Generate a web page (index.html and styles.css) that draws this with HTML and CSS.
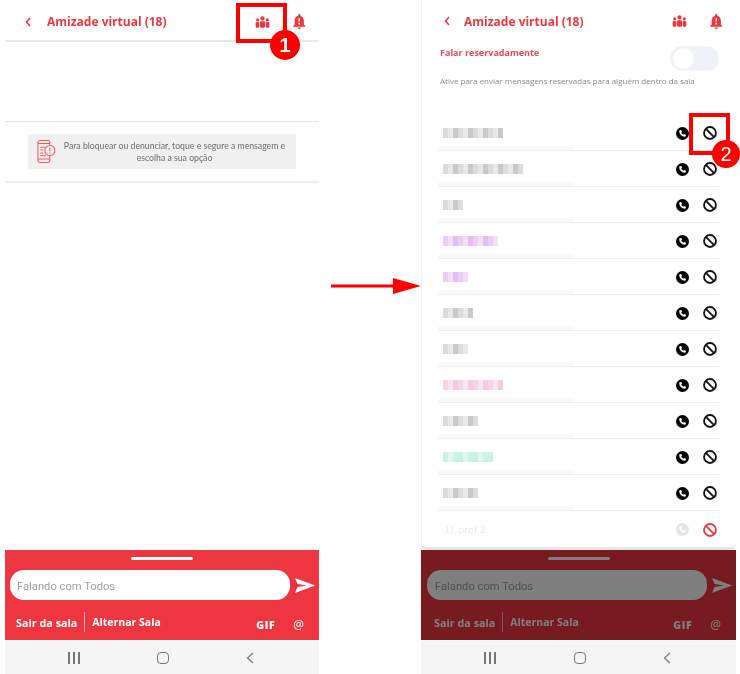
FILE: index.html
```html
<!DOCTYPE html>
<html lang="en">
<head>
  <meta name="viewport" content="width=device-width, initial-scale=1.0">
  <title>Amizade virtual</title>
  <link rel="stylesheet" href="styles.css">
</head>
<body>

  <svg class="defs" width="0" height="0">
    <symbol id="i-back" viewBox="0 0 6 10"><path d="M5 1 1.500 5 5 9" fill="none" stroke="currentColor" stroke-width="1.600"/></symbol>
    <symbol id="i-group" viewBox="0 0 16 13">
      <circle cx="8" cy="2.600" r="2.300"/><circle cx="2.800" cy="4.200" r="1.700"/><circle cx="13.200" cy="4.200" r="1.700"/>
      <rect x="5" y="5.600" width="6" height="7.200" rx="1.600"/><rect x="0.600" y="6.600" width="3.700" height="6.200" rx="1.200"/><rect x="11.700" y="6.600" width="3.700" height="6.200" rx="1.200"/>
    </symbol>
    <symbol id="i-bell" viewBox="4 2.500 16 19.500"><path d="M18 16v-5c0-3.070-1.640-5.640-4.500-6.320V4c0-.830-.670-1.500-1.500-1.500s-1.500.670-1.500 1.500v.680C7.630 5.360 6 7.920 6 11v5l-2 2v1h16v-1l-2-2zm-5 0h-2v-2h2v2zm0-4h-2V8h2v4zm-1 10c1.100 0 2-.900 2-2h-4c0 1.100.900 2 2 2z"/></symbol>
    <symbol id="i-call" viewBox="0 0 24 24">
      <circle cx="12" cy="12" r="12"/>
      <path fill="#fff" d="M7.200 5.800 9.600 5.400l1.500 3.400-1.500 1.500c.800 1.700 2.200 3.100 3.900 3.900l1.500-1.500 3.400 1.500-.400 2.400c-.200.800-.900 1.200-1.600 1.200C10.600 17.800 6 13.200 6 7.400c0-.700.500-1.400 1.200-1.600z"/>
    </symbol>
    <symbol id="i-block" viewBox="0 0 24 24">
      <circle cx="12" cy="12" r="10.200" fill="none" stroke="currentColor" stroke-width="3.200"/>
      <path d="M5 5l14 14" stroke="currentColor" stroke-width="3.200"/>
    </symbol>
    <symbol id="i-send" viewBox="0 0 20 15"><path d="M0 0 20 7.500 0 15 2.500 9 12 7.500 2.500 6z"/></symbol>
    <symbol id="i-tip" viewBox="0 0 20 25">
      <g fill="none" stroke="currentColor" stroke-width="1.100">
        <rect x="1" y="1" width="12.500" height="23" rx="2"/>
        <path d="M1 4h12.500M1 20.500h12.500M3.500 8h5M3.500 11h3M3.500 14h3M3.500 17h6"/>
        <circle cx="13.500" cy="11.500" r="5.300" fill="#f0f0f0"/>
      </g>
      <path d="M12.900 8.500h1.200v3.800h-1.200zM12.900 13.200h1.200v1.200h-1.200z"/>
    </symbol>
  </svg>

  <div class="page">

    <!-- tela 1 -->
    <div class="phone phone-left">
      <div class="top-bar with-line">
        <svg class="back"><use href="#i-back"/></svg>
        <b class="room-title">Amizade virtual (18)</b>
        <svg class="ico-group"><use href="#i-group"/></svg>
        <svg class="ico-bell"><use href="#i-bell"/></svg>
      </div>
      <div class="chat">
        <div class="tip-wrap">
          <div class="tip">
            <svg class="tip-ico"><use href="#i-tip"/></svg>
            <p class="tip-text">Para bloquear ou denunciar, toque e segure a mensagem e<br>escolha a sua opção</p>
          </div>
        </div>
      </div>
      <div class="bar">
        <div class="handle"></div>
        <div class="input-row">
          <input class="msg" type="text" placeholder="Falando com Todos">
          <svg class="send"><use href="#i-send"/></svg>
        </div>
        <div class="links">
          <span class="link">Sair da sala</span>
          <span class="link link-2">Alternar Sala</span>
          <span class="gif">GIF</span>
          <span class="at">@</span>
        </div>
      </div>
      <div class="nav">
        <span class="nav-lines"><i></i><i></i><i></i></span>
        <span class="nav-home"></span>
        <svg class="nav-back" viewBox="0 0 8 12"><path d="M7 1 1.500 6 7 11" fill="none" stroke="#777" stroke-width="1.200"/></svg>
      </div>
      <div class="mark mark-1"></div>
      <div class="badge badge-1">1</div>
    </div>

    <div class="arrow-col">
      <svg class="arrow" viewBox="0 0 90 18"><path d="M0 7.500h62v3H0z"/><path d="M62 1l28 8-28 8z"/></svg>
    </div>

    <!-- tela 2 -->
    <div class="phone phone-right">
      <div class="card">
        <div class="top-bar">
          <svg class="back"><use href="#i-back"/></svg>
          <b class="room-title">Amizade virtual (18)</b>
          <svg class="ico-group"><use href="#i-group"/></svg>
          <svg class="ico-bell"><use href="#i-bell"/></svg>
        </div>
        <div class="private">
          <b class="private-title">Falar reservadamente</b>
          <span class="toggle"><i></i></span>
        </div>
        <p class="private-help">Ative para enviar mensagens reservadas para alguém dentro da sala</p>
        <div class="people">
          <div class="row"><span class="name gray w60"></span><svg class="call"><use href="#i-call"/></svg><svg class="block"><use href="#i-block"/></svg></div>
          <div class="row"><span class="name gray w80"></span><svg class="call"><use href="#i-call"/></svg><svg class="block"><use href="#i-block"/></svg></div>
          <div class="row"><span class="name gray w20"></span><svg class="call"><use href="#i-call"/></svg><svg class="block"><use href="#i-block"/></svg></div>
          <div class="row"><span class="name purple w55"></span><svg class="call"><use href="#i-call"/></svg><svg class="block"><use href="#i-block"/></svg></div>
          <div class="row"><span class="name purple w25"></span><svg class="call"><use href="#i-call"/></svg><svg class="block"><use href="#i-block"/></svg></div>
          <div class="row"><span class="name gray w30"></span><svg class="call"><use href="#i-call"/></svg><svg class="block"><use href="#i-block"/></svg></div>
          <div class="row"><span class="name gray w25"></span><svg class="call"><use href="#i-call"/></svg><svg class="block"><use href="#i-block"/></svg></div>
          <div class="row"><span class="name pink w60"></span><svg class="call"><use href="#i-call"/></svg><svg class="block"><use href="#i-block"/></svg></div>
          <div class="row"><span class="name gray w35"></span><svg class="call"><use href="#i-call"/></svg><svg class="block"><use href="#i-block"/></svg></div>
          <div class="row"><span class="name green w50"></span><svg class="call"><use href="#i-call"/></svg><svg class="block"><use href="#i-block"/></svg></div>
          <div class="row"><span class="name gray w35"></span><svg class="call"><use href="#i-call"/></svg><svg class="block"><use href="#i-block"/></svg></div>
          <div class="row row-blocked"><span class="blocked-name">J.J. prof 2</span><svg class="call"><use href="#i-call"/></svg><svg class="block"><use href="#i-block"/></svg></div>
        </div>
      </div>
      <div class="bar dimmed">
        <div class="handle"></div>
        <div class="input-row">
          <input class="msg" type="text" placeholder="Falando com Todos">
          <svg class="send"><use href="#i-send"/></svg>
        </div>
        <div class="links">
          <span class="link">Sair da sala</span>
          <span class="link link-2">Alternar Sala</span>
          <span class="gif">GIF</span>
          <span class="at">@</span>
        </div>
      </div>
      <div class="nav">
        <span class="nav-lines"><i></i><i></i><i></i></span>
        <span class="nav-home"></span>
        <svg class="nav-back" viewBox="0 0 8 12"><path d="M7 1 1.500 6 7 11" fill="none" stroke="#777" stroke-width="1.200"/></svg>
      </div>
      <div class="mark mark-2"></div>
      <div class="badge badge-2">2</div>
    </div>

  </div>

</body>
</html>
```

FILE: styles.css
```css
body {
  margin: 0;
  background: #fff;
  font-family: "Open Sans", sans-serif;
}
.defs {
  position: absolute;
}
.page {
  display: flex;
  height: 674px;
  width: 740px;
  overflow: hidden;
  padding-left: 5px;
  box-sizing: border-box;
}
.phone {
  position: relative;
  display: flex;
  flex-direction: column;
  height: 674px;
  flex: none;
  filter: blur(.3px);
}
.phone-left {
  width: 314px;
}
.phone-right {
  width: 315px;
}

/* arrow between the two screens */
.arrow-col {
  width: 102px;
  flex: none;
  padding: 277px 0 0 12px;
  box-sizing: border-box;
}
.arrow {
  display: block;
  width: 90px;
  height: 18px;
  fill: #f00;
}

/* header */
.top-bar {
  display: flex;
  align-items: center;
  height: 41px;
  flex: none;
  box-sizing: border-box;
  padding: 1px 0 0 22px;
  color: #ee3640;
  fill: #ee3640;
}
.with-line {
  height: 42px;
  padding: 3px 0 0 20px;
  border-bottom: 2px solid #e6e6e6;
  border-radius: 0 0 3px 3px;
}
.back {
  width: 6px;
  height: 10px;
  flex: none;
}
.room-title {
  margin-left: 16px;
  width: 208px;
  flex: none;
  font-size: 12px;
  font-weight: 700;
  white-space: nowrap;
}
.phone-right .room-title {
  margin-left: 14px;
}
.ico-group {
  width: 15px;
  height: 12px;
  flex: none;
}
.ico-bell {
  width: 12.5px;
  height: 15px;
  margin-left: 23px;
  flex: none;
}

/* left screen content */
.chat {
  flex: 1;
  padding-top: 79px;
}
.tip-wrap {
  border-top: 1px solid #e8e4e6;
  border-bottom: 2px solid #eeeeee;
  padding: 12px 23px;
}
.tip {
  display: flex;
  align-items: center;
  height: 35px;
  background: #f0f0f0;
  padding: 0 10px 0 9px;
}
.tip-ico {
  width: 19px;
  height: 25px;
  flex: none;
  color: #ee5a62;
  fill: #ee5a62;
}
.tip-text {
  flex: 1;
  margin: 0 0 0 7px;
  font-family: Lato, sans-serif;
  font-size: 8.7px;
  line-height: 11.5px;
  text-align: center;
  white-space: nowrap;
  color: #6d6d6d;
}

/* right screen content */
.card {
  flex: 1;
  border-left: 1px solid #f0f0f0;
  border-bottom: 3px solid #e6e6e6;
  border-radius: 0 0 6px 6px;
}
.private {
  display: flex;
  justify-content: space-between;
  align-items: flex-start;
  margin-top: 5px;
  padding: 0 18px;
}
.private-title {
  font-size: 9px;
  font-weight: 700;
  color: #ee4a52;
}
.toggle {
  width: 47px;
  height: 23px;
  margin-top: 1px;
  padding: 1px 2px;
  box-sizing: border-box;
  border-radius: 12px;
  background: #eef1f5;
  box-shadow: 0 0 2px #dde;
}
.toggle i {
  display: block;
  width: 21px;
  height: 21px;
  border-radius: 50%;
  background: #fff;
}
.private-help {
  margin: 0;
  padding: 4px 0 0 18px;
  font-size: 8px;
  line-height: 14px;
  color: #8a8a8a;
  white-space: nowrap;
}
.people {
  margin: 27px 17px 0 16px;
}
.row {
  display: flex;
  align-items: center;
  height: 36px;
  padding: 1px 2px 0 5px;
  box-sizing: border-box;
  border-bottom: 1px solid #eeeeee;
  background: linear-gradient(#fafafa, #fafafa) left bottom / 136px 4px no-repeat;
}
.row-blocked {
  border-bottom: 0;
  background: none;
}
.name {
  height: 10px;
  margin-right: auto;
  filter: blur(.6px);
}
.gray {
  background: repeating-linear-gradient(90deg, #dcdcdc 0 5px, #e9e9e9 5px 10px, #c9c9c9 10px 15px);
}
.purple {
  background: repeating-linear-gradient(90deg, #eccdf6 0 5px, #f3dff9 5px 10px, #e6bdf3 10px 15px);
}
.pink {
  background: repeating-linear-gradient(90deg, #f9d3e6 0 5px, #fde6f0 5px 10px, #f8c9e0 10px 15px);
}
.green {
  background: repeating-linear-gradient(90deg, #c5f3e1 0 5px, #dff8ee 5px 10px, #c9f4e3 10px 15px);
}
.w20 { width: 20px; }
.w25 { width: 25px; }
.w30 { width: 30px; }
.w35 { width: 35px; }
.w50 { width: 50px; }
.w55 { width: 55px; }
.w60 { width: 60px; }
.w80 { width: 80px; }
.blocked-name {
  margin: 0 auto 0 3px;
  font-size: 9.5px;
  color: #e9e9e9;
}
.call {
  width: 13px;
  height: 13px;
  flex: none;
  fill: #000;
}
.block {
  width: 14px;
  height: 14px;
  flex: none;
  margin-left: 14px;
  color: #111;
}
.row-blocked .call {
  fill: #e4e4e4;
}
.row-blocked .block {
  color: #ee3640;
}

/* bottom bar */
.bar {
  position: relative;
  height: 90px;
  flex: none;
  margin-bottom: 1px;
  background: #ee3640;
  color: #fff;
}
.dimmed::after {
  content: "";
  position: absolute;
  inset: 0;
  background: rgba(0, 0, 0, .5);
}
.handle {
  width: 62px;
  height: 3px;
  margin: 0 auto;
  position: relative;
  top: 7px;
  border-radius: 2px;
  background: #fff;
}
.input-row {
  display: flex;
  align-items: center;
  padding: 17px 4px 0 5px;
}
.phone-right .input-row {
  padding-left: 6px;
}
.msg {
  flex: 1;
  min-width: 0;
  height: 30px;
  box-sizing: border-box;
  padding: 2px 7px 0;
  border: 0;
  border-radius: 14px;
  background: #fff;
  font-family: Roboto, sans-serif;
  font-size: 11.2px;
}
.msg::placeholder {
  color: #a0a0a0;
  opacity: 1;
}
.phone-right .msg {
  padding-left: 8px;
}
.send {
  width: 20px;
  height: 15px;
  margin-left: 5px;
  flex: none;
  fill: #fff;
}
.links {
  display: flex;
  align-items: center;
  height: 20px;
  margin-top: 12px;
  padding: 0 15px 0 11px;
}
.phone-right .links {
  padding-left: 13px;
}
.link {
  font-size: 10.8px;
  font-weight: 700;
  white-space: nowrap;
}
.link-2 {
  margin-left: 7px;
  padding-left: 7px;
  font-size: 10.5px;
  line-height: 20px;
  border-left: 1px solid #f9b5b9;
}
.gif {
  margin-left: auto;
  margin-top: 6px;
  font-size: 10.5px;
  font-weight: 800;
  letter-spacing: .6px;
}
.at {
  margin-left: 18px;
  margin-top: 5px;
  font-size: 12px;
}

/* android nav */
.nav {
  display: flex;
  align-items: center;
  height: 33px;
  flex: none;
  padding: 0 65px 0 63px;
  justify-content: space-between;
  background: #f5f5f5;
}
.nav-lines {
  display: flex;
  gap: 3px;
}
.nav-lines i {
  width: 2px;
  height: 12px;
  background: #777;
}
.nav-home {
  width: 10px;
  height: 10px;
  border: 1.500px solid #777;
  border-radius: 4px;
}
.nav-back {
  width: 8px;
  height: 12px;
}

/* tutorial marks */
.mark {
  position: absolute;
  box-sizing: border-box;
  border: 4px solid #f00;
}
.mark-1 {
  left: 231px;
  top: 3px;
  width: 51px;
  height: 40px;
}
.mark-2 {
  left: 268px;
  top: 113px;
  width: 41px;
  height: 42px;
}
.badge {
  position: absolute;
  width: 30px;
  height: 30px;
  border-radius: 50%;
  background: #f00;
  color: #fff;
  font-family: "Liberation Sans", sans-serif;
  font-size: 20px;
  line-height: 30px;
  text-align: center;
}
.badge-1 {
  left: 265px;
  top: 30px;
  font-weight: 700;
}
.badge-2 {
  left: 291px;
  top: 140px;
  width: 28px;
  height: 28px;
  line-height: 28px;
}
```
